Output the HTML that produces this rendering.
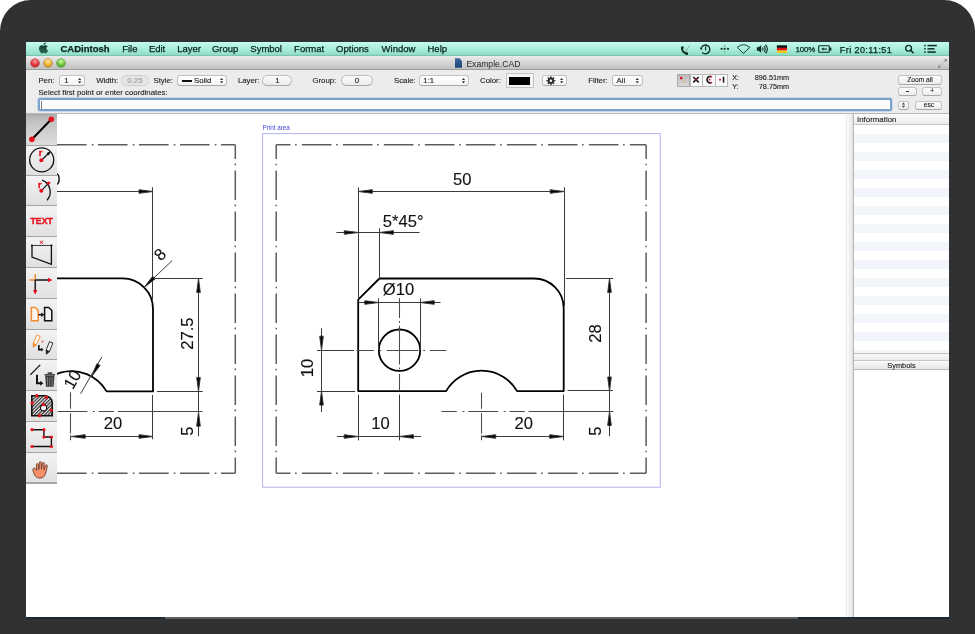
<!DOCTYPE html>
<html><head><meta charset="utf-8">
<style>
*{margin:0;padding:0;box-sizing:border-box}
body .a div{}
html,body{width:975px;height:634px;overflow:hidden;background:#fff;font-family:"Liberation Sans",sans-serif}
.a{position:absolute}
#bezel{left:0;top:0;width:975px;height:634px;background:#303133;border-radius:31px 31px 0 0}
#menubar{left:26px;top:42px;width:923px;height:14px;background:linear-gradient(#c4fbee,#a6ecd8 60%,#8fdcc4);border-bottom:1px solid #7cc4ac}
.mi{position:absolute;top:42px;height:14px;line-height:14px;font-size:9.5px;color:#0a221c;-webkit-text-stroke:0.25px #0a221c}
#titlebar{left:26px;top:56px;width:923px;height:14px;background:linear-gradient(#ececec,#d8d8d8 45%,#c2c2c2);border-bottom:1.2px solid #9c9c9c}
#toolbar{left:26px;top:70px;width:923px;height:43.5px;background:#ececec;border-bottom:1px solid #b9b9b9}
.lb{position:absolute;font-size:7px;color:#222;line-height:10px}
.pop{position:absolute;height:10.5px;border:1px solid #c2c2c2;border-bottom-color:#a8a8a8;border-radius:3px;background:linear-gradient(#fff,#f4f4f4);font-size:7px;line-height:8.5px;color:#111}
.pill{position:absolute;height:10.5px;border:1px solid #c0c0c0;border-bottom-color:#a8a8a8;border-radius:6px;background:linear-gradient(#fafafa,#ebebeb);font-size:7px;line-height:8.5px;color:#111;text-align:center}
.btn{position:absolute;border:1px solid #c2c2c2;border-bottom-color:#a8a8a8;border-radius:3px;background:linear-gradient(#fdfdfd,#ececec);font-size:6.5px;color:#111;text-align:center}
.arr{position:absolute;top:1.5px;width:4px;font-size:5px;line-height:3px;color:#333}
#canvas{left:26px;top:113.5px;width:821px;height:503.5px;background:#fff;overflow:hidden}
#canvas svg{position:absolute;left:-26px;top:-113.5px;will-change:transform}
#tools{left:26px;top:113.5px;width:31px;height:370px;background:#e4e4e4;border-right:0.6px solid #b0b0b0;border-bottom:1px solid #a8a8a8}
.tb{position:absolute;left:0;width:30.5px;height:30.8px;background:linear-gradient(#f2f2f2,#e2e2e2);border-bottom:1.3px solid #a4a4a4}
#divider{left:846px;top:113.5px;width:8px;height:503.5px;background:linear-gradient(90deg,#fbfbfb,#f2f2f2 40%,#e8e8e8 85%,#d8d8d8);border-left:1px solid #ececec;border-right:1px solid #b8b8b8}
#info{left:854px;top:113.5px;width:95px;height:503.5px;background:#fff}
#bottomline{left:26px;top:616.5px;width:923px;height:2px;background:linear-gradient(90deg,#1a2a36 0,#1a2a36 139px,#5e5e5e 139px,#5e5e5e 772px,#1a2a36 772px)}
#toolbar ~ div{-webkit-text-stroke:0.12px currentColor}
</style></head><body><div id="root" style="position:absolute;left:0;top:0;width:975px;height:634px;will-change:transform">
<div id="bezel" class="a"></div>

<div id="canvas" class="a">
<svg width="975" height="634" viewBox="0 0 975 634"><rect x="262.6" y="133.6" width="397.7" height="353.6" fill="none" stroke="#b4b4f2" stroke-width="1"/><text x="262.5" y="130.3" font-size="6.3" fill="#4646d8" font-family='"Liberation Sans", sans-serif'>Print area</text><path d="M276.2 144.8 L646.1 144.8" fill="none" stroke="#5c5c5c" stroke-width="1.5" stroke-dasharray="29.6 4.6 1.6 5.2" stroke-dashoffset="15.3"/><path d="M276.2 144.8 L276.2 473.2" fill="none" stroke="#5c5c5c" stroke-width="1.5" stroke-dasharray="29.6 4.6 1.6 5.2" stroke-dashoffset="15.3"/><path d="M276.2 473.2 L646.1 473.2" fill="none" stroke="#5c5c5c" stroke-width="1.5" stroke-dasharray="29.6 4.6 1.6 5.2" stroke-dashoffset="15.3"/><path d="M646.1 144.8 L646.1 473.2" fill="none" stroke="#5c5c5c" stroke-width="1.5" stroke-dasharray="29.6 4.6 1.6 5.2" stroke-dashoffset="15.3"/><path d="M235.3 144.7 L-150 144.7" fill="none" stroke="#5c5c5c" stroke-width="1.5" stroke-dasharray="29.6 4.6 1.6 5.2" stroke-dashoffset="15.3"/><path d="M235.3 144.7 L235.3 473.2" fill="none" stroke="#5c5c5c" stroke-width="1.5" stroke-dasharray="29.6 4.6 1.6 5.2" stroke-dashoffset="15.3"/><path d="M235.3 473.2 L-150 473.2" fill="none" stroke="#5c5c5c" stroke-width="1.5" stroke-dasharray="29.6 4.6 1.6 5.2" stroke-dashoffset="15.3"/><path d="M379.4 278.5 L534 278.5 A29.7 29.7 0 0 1 563.7 308.2 L563.7 391.1 L517.1 391.1 A41 41 0 0 0 446.1 391.1 L358.2 391.1 L358.2 299.6 Z" fill="none" stroke="#000" stroke-width="1.8" stroke-linejoin="round"/><circle cx="399.5" cy="350.2" r="20.7" fill="none" stroke="#000" stroke-width="1.8" stroke-linejoin="round"/><path d="M-60 278.4 L122.5 278.4 A30.5 30.5 0 0 1 153 308.9 L153 391.4 L106.6 391.4 A41 41 0 0 0 30.2 412.2" fill="none" stroke="#000" stroke-width="1.8" stroke-linejoin="round"/><g stroke="#3a3a3a" stroke-width="1" fill="#000"><line x1="358.5" y1="187.3" x2="358.5" y2="299"/><line x1="564.5" y1="187.3" x2="564.5" y2="306"/><line x1="358.3" y1="191.5" x2="564.2" y2="191.5"/><path d="M358.30 191.50 L372.30 189.70 L372.30 193.30Z"/><path d="M564.20 191.50 L550.20 193.30 L550.20 189.70Z"/><line x1="379.5" y1="228.2" x2="379.5" y2="278.5"/><line x1="336.4" y1="232.5" x2="419.5" y2="232.5"/><path d="M358.30 232.50 L344.30 234.30 L344.30 230.70Z"/><path d="M379.40 232.50 L393.40 230.70 L393.40 234.30Z"/><line x1="378.5" y1="298.3" x2="378.5" y2="350.2"/><line x1="420.5" y1="298.3" x2="420.5" y2="350.2"/><line x1="358.3" y1="302.5" x2="440.5" y2="302.5"/><path d="M378.80 302.50 L364.80 304.30 L364.80 300.70Z"/><path d="M420.20 302.50 L434.20 300.70 L434.20 304.30Z"/><line x1="317" y1="350.5" x2="354" y2="350.5"/><line x1="317" y1="391.5" x2="355" y2="391.5"/><line x1="321.5" y1="328.2" x2="321.5" y2="412"/><path d="M321.50 350.20 L319.70 336.20 L323.30 336.20Z"/><path d="M321.50 391.10 L323.30 405.10 L319.70 405.10Z"/><line x1="358.5" y1="394.5" x2="358.5" y2="440.4"/><line x1="399.5" y1="394.5" x2="399.5" y2="440.4"/><line x1="337" y1="436.5" x2="421.2" y2="436.5"/><path d="M358.20 436.50 L344.20 438.30 L344.20 434.70Z"/><path d="M399.50 436.50 L413.50 434.70 L413.50 438.30Z"/><line x1="563.5" y1="394.5" x2="563.5" y2="440.4"/><line x1="481.7" y1="436.5" x2="563.7" y2="436.5"/><path d="M481.70 436.50 L495.70 434.70 L495.70 438.30Z"/><path d="M563.70 436.50 L549.70 438.30 L549.70 434.70Z"/><line x1="566" y1="278.5" x2="613.3" y2="278.5"/><line x1="567.5" y1="390.5" x2="612.9" y2="390.5"/><line x1="609.5" y1="278.4" x2="609.5" y2="436.2"/><path d="M609.50 278.40 L611.30 292.40 L607.70 292.40Z"/><path d="M609.50 391.00 L607.70 377.00 L611.30 377.00Z"/><path d="M609.50 411.50 L611.30 425.50 L607.70 425.50Z"/><line x1="152.5" y1="187.3" x2="152.5" y2="300"/><line x1="-60" y1="191.5" x2="153" y2="191.5"/><path d="M153.00 191.50 L139.00 193.30 L139.00 189.70Z"/><line x1="172.3" y1="260.4" x2="144.1" y2="287.4"/><path d="M144.10 287.40 L152.73 276.23 L155.27 278.77Z"/><line x1="101.9" y1="356.8" x2="80.6" y2="393.7"/><path d="M91.50 376.70 L96.94 363.68 L100.06 365.48Z"/><line x1="155" y1="278.5" x2="202.7" y2="278.5"/><line x1="157" y1="391.5" x2="202.7" y2="391.5"/><line x1="198.5" y1="278.4" x2="198.5" y2="436.3"/><path d="M198.50 278.40 L200.30 292.40 L196.70 292.40Z"/><path d="M198.50 391.40 L196.70 377.40 L200.30 377.40Z"/><path d="M198.50 412.20 L200.30 426.20 L196.70 426.20Z"/><line x1="152.5" y1="395" x2="152.5" y2="439.2"/><line x1="71.2" y1="436.5" x2="153" y2="436.5"/><path d="M71.20 436.50 L85.20 434.70 L85.20 438.30Z"/><path d="M153.00 436.50 L139.00 438.30 L139.00 434.70Z"/></g><path d="M356.6 350.5 L373.9 350.5 M386.8 350.5 L418.4 350.5 M429.9 350.5 L446.4 350.5 M379.40000000000003 350.5 L381.2 350.5 M423.20000000000005 350.5 L425.0 350.5 M399.5 298.2 L399.5 317.9 M399.5 325.8 L399.5 364.5 M399.5 374 L399.5 391 M399.5 320.90000000000003 L399.5 322.7 M399.5 367.5 L399.5 369.29999999999995 M441.4 411.5 L456.8 411.5 M468.3 411.5 L498.2 411.5 M509.4 411.5 L524.7 411.5 M528.6 411.5 L613.4 411.5 M462.6 411.5 L464.4 411.5 M503.70000000000005 411.5 L505.5 411.5 M481.5 392.8 L481.5 408.8 M481.5 413 L481.5 433.5 M481.5 435.2 L481.5 440.3 M26 411.5 L46 411.5 M57.5 411.5 L87.4 411.5 M98.6 411.5 L113.9 411.5 M117.8 411.5 L202.6 411.5 M51.800000000000004 411.5 L53.6 411.5 M92.89999999999999 411.5 L94.7 411.5 M70.5 392.3 L70.5 408.7 M70.5 413.2 L70.5 433.5 M70.5 435.2 L70.5 440.3 " fill="none" stroke="#4a4a4a" stroke-width="1.05"/><g fill="#111" stroke="#111" stroke-width="0.12" font-family='"Liberation Sans", sans-serif'><text x="462.2" y="179.4" text-anchor="middle" dominant-baseline="central" font-size="16.6">50</text><text x="403.2" y="221.2" text-anchor="middle" dominant-baseline="central" font-size="16.6">5*45°</text><text x="398.5" y="289.6" text-anchor="middle" dominant-baseline="central" font-size="16.6">Ø10</text><text x="0" y="0" transform="translate(307.6 368) rotate(-90)" text-anchor="middle" dominant-baseline="central" font-size="16.6">10</text><text x="380.4" y="423.3" text-anchor="middle" dominant-baseline="central" font-size="16.6">10</text><text x="523.7" y="423.3" text-anchor="middle" dominant-baseline="central" font-size="16.6">20</text><text x="0" y="0" transform="translate(595.7 333.5) rotate(-90)" text-anchor="middle" dominant-baseline="central" font-size="16.6">28</text><text x="0" y="0" transform="translate(595.7 431.2) rotate(-90)" text-anchor="middle" dominant-baseline="central" font-size="16.6">5</text><text x="51.2" y="179.4" text-anchor="middle" dominant-baseline="central" font-size="16.6">50</text><text x="0" y="0" transform="translate(160 254.6) rotate(-45)" text-anchor="middle" dominant-baseline="central" font-size="16.6">8</text><text x="0" y="0" transform="translate(72.6 379.5) rotate(-60)" text-anchor="middle" dominant-baseline="central" font-size="16.6">10</text><text x="0" y="0" transform="translate(187 333.6) rotate(-90)" text-anchor="middle" dominant-baseline="central" font-size="16.6">27.5</text><text x="0" y="0" transform="translate(187 431.2) rotate(-90)" text-anchor="middle" dominant-baseline="central" font-size="16.6">5</text><text x="112.9" y="423.2" text-anchor="middle" dominant-baseline="central" font-size="16.6">20</text></g></svg>
</div>

<!-- menubar -->
<div id="menubar" class="a"></div>
<svg class="a" style="left:38.2px;top:42px" width="11" height="12" viewBox="0 0 24 24"><defs><linearGradient id="ap" x1="0" y1="0" x2="0" y2="1"><stop offset="0" stop-color="#0b3327"/><stop offset="1" stop-color="#2f6a58"/></linearGradient></defs><path fill="url(#ap)" d="M12.152 6.896c-.948 0-2.415-1.078-3.960-1.040-2.040.027-3.910 1.183-4.961 3.014-2.117 3.675-.546 9.103 1.519 12.090 1.013 1.454 2.208 3.090 3.792 3.039 1.520-.065 2.090-.987 3.935-.987 1.831 0 2.350.987 3.960.948 1.637-.026 2.676-1.480 3.676-2.948 1.156-1.688 1.636-3.325 1.662-3.415-.039-.013-3.182-1.221-3.220-4.857-.026-3.040 2.480-4.494 2.597-4.559-1.429-2.090-3.623-2.324-4.390-2.376-2-.156-3.675 1.090-4.610 1.090zM15.530 3.830c.843-1.012 1.400-2.427 1.245-3.830-1.207.052-2.662.805-3.532 1.818-.780.896-1.454 2.338-1.273 3.714 1.338.104 2.715-.688 3.559-1.701"/></svg>
<div class="mi" style="left:60.5px;font-weight:bold">CADintosh</div>
<div class="mi" style="left:122.2px">File</div>
<div class="mi" style="left:148.9px">Edit</div>
<div class="mi" style="left:177.2px">Layer</div>
<div class="mi" style="left:211.9px">Group</div>
<div class="mi" style="left:250.3px">Symbol</div>
<div class="mi" style="left:294.1px">Format</div>
<div class="mi" style="left:336.1px">Options</div>
<div class="mi" style="left:381.6px">Window</div>
<div class="mi" style="left:427.5px">Help</div>
<div class="mi" style="left:795.5px;top:42.5px;font-size:7.9px;letter-spacing:-0.1px">100%</div>
<div class="mi" style="left:839.8px;top:42.6px;font-size:9px;letter-spacing:0.42px">Fri 20:11:51</div>

<!-- titlebar -->
<div id="titlebar" class="a"></div>
<div class="a" style="left:31.3px;top:59.2px;width:7.7px;height:7.7px;border-radius:50%;background:radial-gradient(circle at 50% 30%,#ff9a9a,#e0303a 55%,#b01c20);box-shadow:0 0 0 0.6px #9a3030"></div>
<div class="a" style="left:44.1px;top:59.2px;width:7.7px;height:7.7px;border-radius:50%;background:radial-gradient(circle at 50% 30%,#ffe8a0,#f0b030 55%,#c07818);box-shadow:0 0 0 0.6px #a07020"></div>
<div class="a" style="left:56.9px;top:59.2px;width:7.7px;height:7.7px;border-radius:50%;background:radial-gradient(circle at 50% 30%,#d0ffa0,#68c038 55%,#3a8a20);box-shadow:0 0 0 0.6px #408030"></div>
<div class="a" style="left:455px;top:58.2px;width:7px;height:9.6px;background:linear-gradient(#3d6aa0,#1f4478);clip-path:polygon(0 0,65% 0,100% 30%,100% 100%,0 100%)"></div>
<div class="a" style="left:466.4px;top:58.5px;font-size:8.6px;line-height:11px;color:#2a2a2a">Example.CAD</div>

<svg class="a" style="left:676px;top:41px" width="274" height="16" viewBox="676 41 274 16"><path d="M682.3 47.6 C681 49.6 683.6 53.2 687 53.8" fill="none" stroke="#0c2a22" stroke-width="2" stroke-linecap="round"/><circle cx="682.4" cy="47.8" r="1.3" fill="#0c2a22"/><circle cx="686.8" cy="53.6" r="1.3" fill="#0c2a22"/><path d="M685.6 51.2 L689.8 45.6" stroke="#7fa898" stroke-width="0.9"/><path d="M685.2 51.8 L685.6 49.6 L687.2 50.8Z" fill="#7fa898"/><path d="M701.6 47.2 A4.4 4.4 0 1 1 702.2 52.4" fill="none" stroke="#0c2a22" stroke-width="1.3"/><path d="M699.6 47.4 L702.6 47.6 L701.4 50.2Z" fill="#0c2a22"/><path d="M705.6 46.2 L705.6 50.6" stroke="#0c2a22" stroke-width="1.1"/><circle cx="721.6" cy="48.8" r="1.15" fill="#173a2e"/><circle cx="724.7" cy="48.8" r="1.15" fill="#173a2e"/><circle cx="728" cy="48.8" r="1.15" fill="#173a2e"/><path d="M724.7 44.6 L726 46.4 L723.4 46.4Z M724.7 53 L726 51.2 L723.4 51.2Z" fill="#7fa898"/><path d="M743.4 53.4 L737.2 47.3 Q743.4 42.2 749.9 47.3 Z" fill="none" stroke="#0c2a22" stroke-width="0.9" stroke-linejoin="round"/><path d="M756.8 47.2 L758.6 47.2 L761.2 45.2 L761.2 52.8 L758.6 50.8 L756.8 50.8Z" fill="#0c2a22"/><path d="M762.4 47.6 A1.8 1.8 0 0 1 762.4 50.4 M763.9 46.2 A3.6 3.6 0 0 1 763.9 51.8 M765.4 44.8 A5.4 5.4 0 0 1 765.4 53.2" fill="none" stroke="#0c2a22" stroke-width="1.1"/><rect x="776.9" y="45.3" width="10.1" height="2.6" fill="#111"/><rect x="776.9" y="47.9" width="10.1" height="2.6" fill="#e01010"/><rect x="776.9" y="50.5" width="10.1" height="2.5" fill="#f8c818"/><rect x="818.7" y="45.8" width="10.6" height="6.5" rx="0.8" fill="none" stroke="#0c2a22" stroke-width="1.1"/><rect x="829.8" y="47.6" width="1.6" height="3" fill="#0c2a22"/><path d="M821.2 49.05 L823.6 47.6 L823.6 50.5Z" fill="#0c2a22"/><rect x="823.4" y="48.5" width="3.6" height="1.1" fill="#0c2a22"/><circle cx="908.6" cy="48.2" r="2.9" fill="none" stroke="#0c2a22" stroke-width="1.3"/><path d="M910.6 50.2 L913 52.6" stroke="#0c2a22" stroke-width="1.6" stroke-linecap="round"/><rect x="924.2" y="44.8" width="1.5" height="1.5" fill="#0c2a22"/><rect x="924.2" y="48.1" width="1.5" height="1.5" fill="#0c2a22"/><rect x="924.2" y="51.3" width="1.5" height="1.5" fill="#0c2a22"/><rect x="927.5" y="44.8" width="9.3" height="1.5" fill="#0c2a22"/><rect x="927.5" y="48.1" width="7" height="1.5" fill="#0c2a22"/><rect x="927.5" y="51.3" width="8.3" height="1.5" fill="#0c2a22"/></svg><svg class="a" style="left:937px;top:58px" width="11" height="11" viewBox="0 0 11 11"><path d="M1.5 9.5 L4.5 6.5 M9.5 1.5 L6.5 4.5" stroke="#8a8a8a" stroke-width="0.9"/><path d="M1 10 L1 7 L4 10Z M10 1 L10 4 L7 1Z" fill="#8a8a8a"/></svg>
<!-- toolbar -->
<div id="toolbar" class="a"></div>
<div class="a" style="left:38.4px;top:76.50px;font-size:7.8px;line-height:7.8px;color:#222;white-space:nowrap;">Pen:</div><div class="pop" style="left:58.5px;top:75.4px;width:26.90px;height:10.70px;"></div><div class="a" style="left:64.2px;top:76.50px;font-size:7.8px;line-height:7.8px;color:#222;white-space:nowrap;">1</div><svg class="a" style="left:0;top:0;overflow:visible" width="1" height="1"><path d="M79.70 78.00 L81.30 80.10 L78.10 80.10Z M79.70 83.40 L81.30 81.30 L78.10 81.30Z" fill="#333"/></svg><div class="a" style="left:96.2px;top:76.50px;font-size:7.8px;line-height:7.8px;color:#222;white-space:nowrap;">Width:</div><div class="pill" style="left:120.8px;top:75.4px;width:28.20px;height:10.80px;background:#e6e6e6;border-color:#cdcdcd"></div><div class="a" style="left:84.9px;width:100px;text-align:center;top:76.50px;font-size:7.8px;line-height:7.8px;color:#9a9a9a;white-space:nowrap;">0.25</div><div class="a" style="left:153.5px;top:76.50px;font-size:7.8px;line-height:7.8px;color:#222;white-space:nowrap;">Style:</div><div class="pop" style="left:176.7px;top:75.4px;width:50.60px;height:10.70px;"></div><div class="a" style="left:181.7px;top:80px;width:10px;height:1.6px;background:#111"></div><div class="a" style="left:194px;top:76.50px;font-size:7.8px;line-height:7.8px;color:#222;white-space:nowrap;">Solid</div><svg class="a" style="left:0;top:0;overflow:visible" width="1" height="1"><path d="M221.60 78.00 L223.20 80.10 L220.00 80.10Z M221.60 83.40 L223.20 81.30 L220.00 81.30Z" fill="#333"/></svg><div class="a" style="left:237.9px;top:76.50px;font-size:7.8px;line-height:7.8px;color:#222;white-space:nowrap;">Layer:</div><div class="pill" style="left:262.3px;top:75.4px;width:30.20px;height:10.80px;"></div><div class="a" style="left:227.39999999999998px;width:100px;text-align:center;top:76.50px;font-size:7.8px;line-height:7.8px;color:#222;white-space:nowrap;">1</div><div class="a" style="left:312.4px;top:76.50px;font-size:7.8px;line-height:7.8px;color:#222;white-space:nowrap;">Group:</div><div class="pill" style="left:340.6px;top:75.4px;width:32.20px;height:10.80px;"></div><div class="a" style="left:306.8px;width:100px;text-align:center;top:76.50px;font-size:7.8px;line-height:7.8px;color:#222;white-space:nowrap;">0</div><div class="a" style="left:394px;top:76.50px;font-size:7.8px;line-height:7.8px;color:#222;white-space:nowrap;">Scale:</div><div class="pop" style="left:418.6px;top:75.4px;width:50.70px;height:10.70px;"></div><div class="a" style="left:423.3px;top:76.50px;font-size:7.8px;line-height:7.8px;color:#222;white-space:nowrap;">1:1</div><svg class="a" style="left:0;top:0;overflow:visible" width="1" height="1"><path d="M463.50 78.00 L465.10 80.10 L461.90 80.10Z M463.50 83.40 L465.10 81.30 L461.90 81.30Z" fill="#333"/></svg><div class="a" style="left:480px;top:76.50px;font-size:7.8px;line-height:7.8px;color:#222;white-space:nowrap;">Color:</div><div class="a" style="left:505.9px;top:73.4px;width:27.70px;height:14.60px;background:#f4f4f4;border:1px solid #c4c4c4"></div><div class="a" style="left:509.3px;top:77.4px;width:21.00px;height:7.30px;background:#000"></div><div class="pop" style="left:541.8px;top:75.4px;width:25.70px;height:10.60px;"></div><svg class="a" style="left:0;top:0;overflow:visible" width="1" height="1"><path d="M550.11 77.60 L550.40 76.13 L551.40 76.13 L551.69 77.60 L552.54 77.95 L553.78 77.12 L554.48 77.82 L553.65 79.06 L554.00 79.91 L555.47 80.20 L555.47 81.20 L554.00 81.49 L553.65 82.34 L554.48 83.58 L553.78 84.28 L552.54 83.45 L551.69 83.80 L551.40 85.27 L550.40 85.27 L550.11 83.80 L549.26 83.45 L548.02 84.28 L547.32 83.58 L548.15 82.34 L547.80 81.49 L546.33 81.20 L546.33 80.20 L547.80 79.91 L548.15 79.06 L547.32 77.82 L548.02 77.12 L549.26 77.95Z M552.20 80.70 A1.3 1.3 0 1 0 549.60 80.70 A1.3 1.3 0 1 0 552.20 80.70Z" fill="#2a2a2a" fill-rule="evenodd"/></svg><svg class="a" style="left:0;top:0;overflow:visible" width="1" height="1"><path d="M561.60 78.00 L563.20 80.10 L560.00 80.10Z M561.60 83.40 L563.20 81.30 L560.00 81.30Z" fill="#333"/></svg><div class="a" style="left:588.2px;top:76.50px;font-size:7.8px;line-height:7.8px;color:#222;white-space:nowrap;">Filter:</div><div class="pop" style="left:612.3px;top:75.4px;width:31.20px;height:10.70px;"></div><div class="a" style="left:616.6px;top:76.50px;font-size:7.8px;line-height:7.8px;color:#222;white-space:nowrap;">All</div><svg class="a" style="left:0;top:0;overflow:visible" width="1" height="1"><path d="M637.30 78.00 L638.90 80.10 L635.70 80.10Z M637.30 83.40 L638.90 81.30 L635.70 81.30Z" fill="#333"/></svg><div class="a" style="left:676.7px;top:74.4px;width:51.20px;height:12.40px;background:#f8f8f8;border:1px solid #b9b9b9"></div><div class="a" style="left:676.7px;top:74.4px;width:13.60px;height:12.40px;background:linear-gradient(#bdbdbd,#d8d8d8);border:1px solid #a9a9a9"></div><div class="a" style="left:689.5px;top:74.5px;width:1px;height:12.4px;background:#b9b9b9"></div><div class="a" style="left:702.3px;top:74.5px;width:1px;height:12.4px;background:#b9b9b9"></div><div class="a" style="left:715.2px;top:74.5px;width:1px;height:12.4px;background:#b9b9b9"></div><svg class="a" style="left:0;top:0;overflow:visible" width="1" height="1"><circle cx="681.2" cy="78.1" r="1.3" fill="#d81030"/><rect x="682.6" y="80.6" width="2" height="2" fill="#d8b898"/><path d="M693.3 77 L698.7 82.4 M698.7 77 L693.3 82.4" stroke="#181010" stroke-width="1.5"/><circle cx="696" cy="79.7" r="0.9" fill="#c01030"/><path d="M711 76.6 A3.2 3.2 0 1 0 711 82.8" fill="none" stroke="#181010" stroke-width="1.6"/><path d="M710.6 76.3 L712 77.2 M710.6 83.1 L712 82.2" stroke="#d01030" stroke-width="1.3"/><circle cx="709.6" cy="79.7" r="0.9" fill="#d01030"/><rect x="722.8" y="76.8" width="1.5" height="5.8" fill="#181010"/><circle cx="720" cy="79.8" r="1" fill="#d01030"/></svg><div class="a" style="left:732.2px;top:73.91px;font-size:7.2px;line-height:7.2px;color:#222;white-space:nowrap;">X:</div><div class="a" style="right:185.79999999999995px;top:73.82px;font-size:7.3px;line-height:7.3px;color:#222;white-space:nowrap;">896.51mm</div><div class="a" style="left:732.2px;top:82.91px;font-size:7.2px;line-height:7.2px;color:#222;white-space:nowrap;">Y:</div><div class="a" style="right:185.79999999999995px;top:82.82px;font-size:7.3px;line-height:7.3px;color:#222;white-space:nowrap;">78.75mm</div><div class="btn" style="left:897.6px;top:75.4px;width:44.80px;height:9.20px;"></div><div class="a" style="left:870px;width:100px;text-align:center;top:77.01px;font-size:6.6px;line-height:6.6px;color:#222;white-space:nowrap;">Zoom all</div><div class="btn" style="left:897.6px;top:86.8px;width:19.70px;height:9.00px;"></div><div class="a" style="left:905.6px;top:91px;width:3.4px;height:0.9px;background:#333"></div><div class="btn" style="left:922.2px;top:86.8px;width:20.20px;height:9.00px;"></div><div class="a" style="left:882.3px;width:100px;text-align:center;top:88.41px;font-size:6.6px;line-height:6.6px;color:#222;white-space:nowrap;">+</div><div class="btn" style="left:898px;top:100.6px;width:11.10px;height:9.00px;"></div><svg class="a" style="left:0;top:0;overflow:visible" width="1" height="1"><path d="M903.50 102.40 L905.10 104.50 L901.90 104.50Z M903.50 107.80 L905.10 105.70 L901.90 105.70Z" fill="#333"/></svg><div class="btn" style="left:915.4px;top:100.6px;width:27.00px;height:9.00px;"></div><div class="a" style="left:878.9px;width:100px;text-align:center;top:102.11px;font-size:6.6px;line-height:6.6px;color:#222;white-space:nowrap;">esc</div><div class="a" style="left:38.4px;top:88.50px;font-size:7.8px;line-height:7.8px;color:#222;white-space:nowrap;">Select first point or enter coordinates:</div><div class="a" style="left:38.4px;top:98.2px;width:853.50px;height:13.10px;background:#fff;border:2px solid #7ba2cb;border-radius:2px;box-shadow:0 0 0 0.7px #b9cfe5"></div><div class="a" style="left:41.3px;top:101px;width:1.1px;height:8px;background:#777"></div>

<!-- left tools -->
<div id="tools" class="a"><div class="tb" style="top:0px;height:32.0px;background:linear-gradient(#a8a8a8 0,#b6b6b6 3px,#c4c4c4 8px,#dedede)"></div><div class="tb" style="top:32.0px;height:30.4px;background:linear-gradient(#f3f3f3,#e0e0e0)"></div><div class="tb" style="top:62.4px;height:30.4px;background:linear-gradient(#f3f3f3,#e0e0e0)"></div><div class="tb" style="top:92.8px;height:30.9px;background:linear-gradient(#f3f3f3,#e0e0e0)"></div><div class="tb" style="top:123.7px;height:30.5px;background:linear-gradient(#f3f3f3,#e0e0e0)"></div><div class="tb" style="top:154.2px;height:30.9px;background:linear-gradient(#f3f3f3,#e0e0e0)"></div><div class="tb" style="top:185.1px;height:31.1px;background:linear-gradient(#f3f3f3,#e0e0e0)"></div><div class="tb" style="top:216.2px;height:30.5px;background:linear-gradient(#f3f3f3,#e0e0e0)"></div><div class="tb" style="top:246.7px;height:30.9px;background:linear-gradient(#f3f3f3,#e0e0e0)"></div><div class="tb" style="top:277.6px;height:31.1px;background:linear-gradient(#f3f3f3,#e0e0e0)"></div><div class="tb" style="top:308.7px;height:30.4px;background:linear-gradient(#f3f3f3,#e0e0e0)"></div><div class="tb" style="top:339.1px;height:30.4px;background:linear-gradient(#f3f3f3,#e0e0e0)"></div><svg class="a" style="left:0;top:0" width="31" height="370" viewBox="26 113.5 31 370"><line x1="32" y1="138.7" x2="51.3" y2="118.8" stroke="#000" stroke-width="2"/><circle cx="31.9" cy="138.8" r="2.8" fill="#e8101a"/><circle cx="51.3" cy="118.7" r="2.8" fill="#e8101a"/><circle cx="41.7" cy="159.4" r="12" fill="none" stroke="#111" stroke-width="1.3"/><line x1="41.5" y1="159.8" x2="50" y2="151.5" stroke="#111" stroke-width="1.2"/><path d="M50.5 151 L46.5 152.6 L48.9 155 Z" fill="#111"/><circle cx="41.3" cy="159.8" r="2" fill="#e8101a"/><text x="38.8" y="155.4" font-size="9" font-weight="bold" fill="#e8101a" stroke="#e8101a" stroke-width="0.4" font-family="Liberation Sans">r</text><path d="M42 179.7 A12.5 12.5 0 0 1 47 199.8" fill="none" stroke="#111" stroke-width="1.3"/><line x1="41.4" y1="190.2" x2="48.6" y2="182.6" stroke="#111" stroke-width="1.1"/><circle cx="41.3" cy="190.3" r="2" fill="#e8101a"/><circle cx="48.6" cy="182.6" r="1.7" fill="#e8101a"/><text x="37.9" y="187.6" font-size="9" font-weight="bold" fill="#e8101a" stroke="#e8101a" stroke-width="0.4" font-family="Liberation Sans">r</text><text x="41.7" y="223.9" text-anchor="middle" font-size="8.6" font-weight="bold" fill="#e8101a" stroke="#e8101a" stroke-width="0.35" textLength="22.4" lengthAdjust="spacingAndGlyphs" font-family="Liberation Sans">TEXT</text><path d="M32 245 L32 256.6 L51.4 263.8 L51.4 245" fill="none" stroke="#111" stroke-width="1.3"/><line x1="32" y1="245" x2="51.4" y2="245" stroke="#111" stroke-width="0.8"/><circle cx="32" cy="245" r="1.1" fill="#111"/><circle cx="51.4" cy="245" r="1.1" fill="#111"/><path d="M39.8 240.2 L43.2 243.4 M43.2 240.2 L39.8 243.4" stroke="#e8101a" stroke-width="1"/><line x1="29.5" y1="279.5" x2="36" y2="279.5" stroke="#f08a30" stroke-width="1.5"/><line x1="35.2" y1="273.5" x2="35.2" y2="280" stroke="#f08a30" stroke-width="1.5"/><path d="M35.2 279.5 L50 279.5 M35.2 279.5 L35.2 292" stroke="#111" stroke-width="1.4" fill="none"/><path d="M52.5 279.5 L48 277.3 L48 281.7Z M35.2 294 L33 289.5 L37.4 289.5Z" fill="#e8101a"/><path d="M31.4 307 L35.4 307 L38.2 310 L38.2 320.2 L31.4 320.2 Z" fill="#fff8f0" stroke="#f08a30" stroke-width="1.5"/><path d="M44.6 307 L48.8 307 L51.8 310 L51.8 320.2 L44.6 320.2 Z" fill="#f4f4f4" stroke="#111" stroke-width="1.5"/><path d="M38.4 314.2 L42 314.2" stroke="#111" stroke-width="1.4"/><path d="M44.4 314.2 L41.2 312 L41.2 316.4Z" fill="#111"/><path d="M36.35 344.30 L40.23 335.96 L36.97 334.44 L33.09 342.78Z" fill="#fff6ee" stroke="#f08a30" stroke-width="0.9" stroke-linejoin="round"/><path d="M33.20 346.80 L36.35 344.30 L33.09 342.78Z" fill="#f08a30" stroke="#f08a30" stroke-width="0.7" stroke-linejoin="round"/><path d="M49.41 351.13 L52.87 342.47 L49.53 341.13 L46.07 349.79Z" fill="#f6f6f6" stroke="#1a1a1a" stroke-width="0.9" stroke-linejoin="round"/><path d="M46.40 353.80 L49.41 351.13 L46.07 349.79Z" fill="#1a1a1a" stroke="#1a1a1a" stroke-width="0.7" stroke-linejoin="round"/><path d="M41.6 340.2 L43.4 342 M43.4 340.2 L41.6 342" stroke="#e8101a" stroke-width="0.8"/><path d="M38.8 344.6 L38.8 349.1 L41.6 349.1" fill="none" stroke="#111" stroke-width="1.6"/><path d="M43.6 349.1 L41.2 347.3 L41.2 350.9Z" fill="#111"/><line x1="30.3" y1="374.4" x2="40.2" y2="364.4" stroke="#111" stroke-width="1.3"/><path d="M37 374.2 L37 382.7 L41 382.7" fill="none" stroke="#111" stroke-width="2"/><path d="M43.4 382.7 L40.2 380.2 L40.2 385.2Z" fill="#111"/><path d="M45.2 375.4 L54.4 375.4 L53.6 386.2 L46 386.2 Z" fill="#3a3a3a"/><rect x="44.6" y="373.6" width="10.4" height="1.6" fill="#3a3a3a"/><rect x="47.6" y="371.8" width="4.6" height="1.6" fill="#3a3a3a"/><path d="M47.5 376.6 L47.5 385.4 M49.8 376.6 L49.8 385.4 M52.1 376.6 L52.1 385.4" stroke="#9a9a9a" stroke-width="0.7"/><defs><pattern id="ht" width="2.4" height="2.4" patternUnits="userSpaceOnUse" patternTransform="rotate(45)"><rect width="1.2" height="2.4" fill="#333"/></pattern></defs><path d="M31.8 395.2 L45.4 395.2 Q51.8 396.5 52.2 402 L52.2 415.2 L31.8 415.2 Z" fill="url(#ht)" stroke="#111" stroke-width="1.6"/><circle cx="43.6" cy="407.3" r="3.1" fill="#f2f2f2" stroke="#111" stroke-width="1.1"/><circle cx="36.9" cy="395.2" r="1.7" fill="#e8101a"/><circle cx="46.3" cy="396.9" r="1.7" fill="#e8101a"/><circle cx="32.1" cy="402.5" r="1.7" fill="#e8101a"/><circle cx="43.5" cy="404" r="1.7" fill="#e8101a"/><circle cx="51.2" cy="409.6" r="1.7" fill="#e8101a"/><circle cx="39.7" cy="415.2" r="1.7" fill="#e8101a"/><path d="M32 429.2 L43.9 429.2 L43.9 436.5 L51.4 436.5 L51.4 446 L32 446" fill="none" stroke="#111" stroke-width="1.4"/><circle cx="32" cy="429.2" r="1.6" fill="#e8101a"/><circle cx="43.9" cy="429.2" r="1.6" fill="#e8101a"/><circle cx="43.9" cy="436.5" r="1.6" fill="#e8101a"/><circle cx="51.4" cy="436.5" r="1.6" fill="#e8101a"/><circle cx="51.4" cy="446" r="1.6" fill="#e8101a"/><circle cx="32" cy="446" r="1.6" fill="#e8101a"/><g transform="translate(41.3 469.4) scale(1.12) translate(-40.7 -467.4)"><path d="M35.5 473 C33.5 470 32.4 466.5 34 465.8 C35 465.4 35.8 466.8 36.6 468 L36.4 462.6 C36.4 461.6 37.9 461.5 38.1 462.4 L38.6 467 L38.9 460.8 C39 459.8 40.6 459.8 40.7 460.8 L40.8 466.8 L41.8 461.3 C42 460.4 43.5 460.6 43.4 461.6 L43 467.3 L44.5 463.4 C44.8 462.5 46.2 462.8 46 463.8 C45.4 467.5 44.8 471 43.2 473.2 C41.4 475.2 37.4 475.2 35.5 473 Z" fill="#f7906a" stroke="#6a3a2a" stroke-width="0.8"/></g></svg></div>

<div id="divider" class="a"></div>
<div id="info" class="a"><div class="a" style="left:0;top:0;width:95px;height:11.2px;background:linear-gradient(#fbfbfb,#ececec);border-bottom:1px solid #c8c8c8"></div><div class="a" style="left:3px;top:2.1px;font-size:7.9px;line-height:7.9px;color:#222">Information</div><div class="a" style="left:0;top:20.5px;width:95px;height:9px;background:#f2f5fa"></div><div class="a" style="left:0;top:38.5px;width:95px;height:9px;background:#f2f5fa"></div><div class="a" style="left:0;top:56.5px;width:95px;height:9px;background:#f2f5fa"></div><div class="a" style="left:0;top:74.5px;width:95px;height:9px;background:#f2f5fa"></div><div class="a" style="left:0;top:92.5px;width:95px;height:9px;background:#f2f5fa"></div><div class="a" style="left:0;top:110.5px;width:95px;height:9px;background:#f2f5fa"></div><div class="a" style="left:0;top:128.5px;width:95px;height:9px;background:#f2f5fa"></div><div class="a" style="left:0;top:146.5px;width:95px;height:9px;background:#f2f5fa"></div><div class="a" style="left:0;top:164.5px;width:95px;height:9px;background:#f2f5fa"></div><div class="a" style="left:0;top:182.5px;width:95px;height:9px;background:#f2f5fa"></div><div class="a" style="left:0;top:200.5px;width:95px;height:9px;background:#f2f5fa"></div><div class="a" style="left:0;top:218.5px;width:95px;height:9px;background:#f2f5fa"></div><div class="a" style="left:0;top:236.5px;width:95px;height:9px;background:#f2f5fa"></div><div class="a" style="left:0;top:239.3px;width:95px;height:7.899999999999977px;background:linear-gradient(#f8f8f8,#ececec);border-top:1px solid #c4c4c4;border-bottom:1px solid #c8c8c8"></div><div class="a" style="left:0;top:247.2px;width:95px;height:9.800000000000011px;background:linear-gradient(#fafafa,#e6e6e6);border-bottom:1px solid #bdbdbd"></div><div class="a" style="left:0;width:95px;text-align:center;top:248.7px;font-size:7.4px;line-height:7.4px;color:#222">Symbols</div></div>
<div id="bottomline" class="a"></div>
</div></body></html>
